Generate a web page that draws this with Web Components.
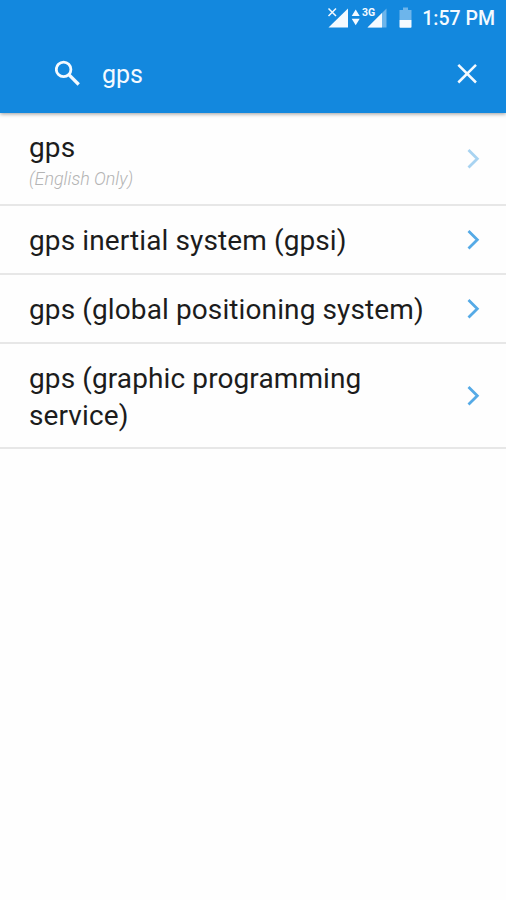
<!DOCTYPE html>
<html lang="en">
<head>
<meta charset="utf-8">
<title>Search</title>
<style>
html, body { margin: 0; height: 100%; background: #fefefe; font-family: Roboto, "Liberation Sans", sans-serif; overflow: hidden; }
</style>
</head>
<body>
<app-screen></app-screen>
<script>
const define = (name, html) => {
  const template = document.createElement('template');
  template.innerHTML = html;
  customElements.define(name, class extends HTMLElement {
    constructor() {
      super();
      this.attachShadow({ mode: 'open' }).append(template.content.cloneNode(true));
    }
  });
};

define('status-bar', `
<style>
:host { display: flex; height: 36px; box-sizing: border-box; justify-content: space-between; align-items: center; padding: 0 11px 0 325px; color: #f4faff; }
svg { display: block; width: 90px; height: 36px; flex: none; }
time { padding-top: 2px; font-size: 19.5px; line-height: 22px; font-weight: 500; white-space: nowrap; }
text { font: 700 10.5px Roboto, sans-serif; }
</style>
<svg viewBox="325 0 90 36" fill="currentColor">
  <path d="M348 8.5V27.5H328.5Z"/>
  <path d="M328.5 8.5l7.5 7.5M336 8.5l-7.5 7.5" stroke="#1388de" stroke-width="4"/>
  <path d="M328.5 8.5l7.5 7.5M336 8.5l-7.5 7.5" stroke="currentColor" stroke-width="1.5"/>
  <path d="M355.7 9.5l4 6.5h-8zM355.7 25.2l4-6.5h-8z"/>
  <path d="M386.5 8.5V27.5H367.5Z" opacity=".4"/>
  <path d="M382 13V27.5H367.5Z"/>
  <path d="M362 6h14.5v11H362z" fill="#1388de"/>
  <text x="362" y="16">3G</text>
  <path d="M403 7.500h5v2.500h3.500V20h-12V10h3.500z" opacity=".4"/>
  <path d="M399.500 20h12v7q0 .8-.8.8h-10.400q-.8 0-.8-.8z"/>
</svg>
<time>1:57 PM</time>`);

define('search-bar', `
<style>
:host { display: flex; align-items: center; height: 77px; box-sizing: border-box; padding: 0 29px 0 55px; color: #f4faff; }
svg { display: block; flex: none; fill: none; stroke: currentColor; stroke-width: 2.8; }
.q { flex: 1; margin-left: 22px; font-size: 25px; line-height: 30px; }
</style>
<svg width="25" height="77" viewBox="55 36 25 77"><circle cx="63.600" cy="69.400" r="7.300"/><path d="M68.600 74.400L78.700 84.500" stroke-width="3.300"/></svg>
<span class="q"><slot></slot></span>
<svg width="20" height="77" viewBox="457 36 20 77"><path d="M458.300 64.800L476 82.500M476 64.800L458.300 82.500" stroke-width="2.500"/></svg>`);

define('app-header', `
<style>
:host { display: block; height: 113px; background: #1388de; box-shadow: 0 1px 4px rgba(0,0,0,.4); position: relative; }
</style>
<slot></slot>`);

define('result-row', `
<style>
:host { display: flex; align-items: center; box-sizing: border-box; height: 69px; padding: 0 26px 0 29px; border-bottom: 2px solid #e7e7e7; color: #1c1c1c; }
:host([noted]) { height: 93px; }
:host([tall]) { height: 105px; }
.t { flex: 1; padding-top: 2px; font-size: 28px; line-height: 37px; letter-spacing: .11px; }
:host([noted]) .t { padding-top: 1px; }
::slotted(small) { display: block; padding-top: 2px; font-size: 17.900px; line-height: 22px; font-style: italic; font-weight: 300; letter-spacing: 0; color: #b4b4b4; }
svg { display: block; flex: none; fill: none; stroke: #55aae6; stroke-width: 2.800; }
:host([noted]) svg { opacity: .5; }
</style>
<div class="t"><div><slot></slot></div><slot name="note"></slot></div>
<svg width="13" height="20" viewBox="0 0 13 20"><path d="M1.500 1L10.300 9.700L1.500 18.400"/></svg>`);

define('app-screen', `
<style>:host { display: block; height: 900px; }</style>
<app-header><status-bar></status-bar><search-bar>gps</search-bar></app-header>
<main>
  <result-row noted>gps<small slot="note">(English Only)</small></result-row>
  <result-row>gps inertial system (gpsi)</result-row>
  <result-row>gps (global positioning system)</result-row>
  <result-row tall>gps (graphic programming service)</result-row>
</main>`);
</script>
</body>
</html>
